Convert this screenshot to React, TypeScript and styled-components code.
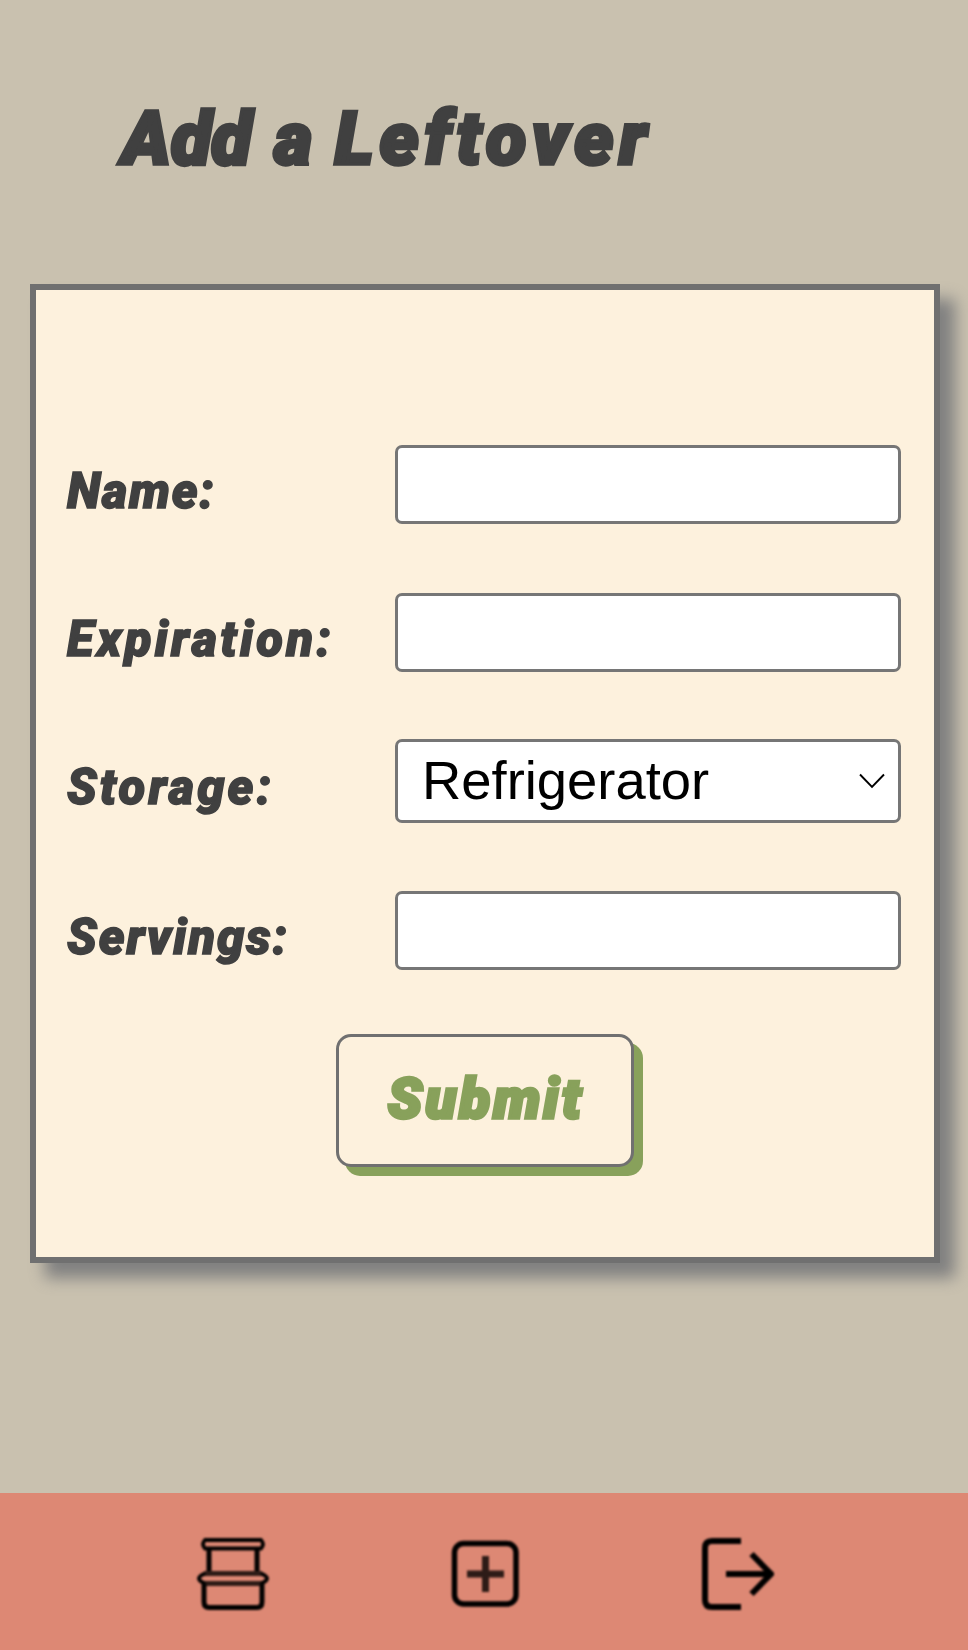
import React from 'react';
import styled, { createGlobalStyle } from 'styled-components';

const GlobalStyle = createGlobalStyle`
  *, *::before, *::after { box-sizing: border-box; }
  body { margin: 0; background: #c9c1af; }
`;

const display = `
  font-family: Roboto, "Liberation Sans", sans-serif;
  font-weight: 900;
  font-style: italic;
  white-space: nowrap;
`;

const Page = styled.div`
  display: flex;
  flex-direction: column;
  height: 1650px;
  overflow: hidden;
  background: #c9c1af;
`;

const Header = styled.header`
  height: 284px;
  padding: 94px 0 0 122px;
`;

const Title = styled.h1`
  ${display}
  margin: 0;
  font-size: 74px;
  line-height: 90px;
  color: #404040;
  -webkit-text-stroke: 3.5px #404040;
`;

const Word = styled.span<{ $spacing: number; $gap?: number }>`
  letter-spacing: ${(p) => p.$spacing}px;
  word-spacing: ${(p) => p.$gap ?? 0}px;
`;

const Card = styled.form`
  display: flex;
  flex-direction: column;
  width: 910px;
  height: 979px;
  margin: 0 0 0 30px;
  padding: 155px 33px 0 31px;
  border: 6px solid #707070;
  background: #fdf1dd;
  box-shadow: 15px 15px 15px #808080;
`;

const Row = styled.div<{ $gap: number }>`
  display: flex;
  justify-content: space-between;
  align-items: flex-start;
  margin-bottom: ${(p) => p.$gap}px;
`;

const Label = styled.label<{ $spacing: number; $drop?: number }>`
  ${display}
  padding-top: ${(p) => p.$drop ?? 22}px;
  font-size: 49px;
  line-height: 50px;
  letter-spacing: ${(p) => p.$spacing}px;
  color: #404040;
  -webkit-text-stroke: 1.4px #404040;
`;

const Input = styled.input`
  width: 506px;
  height: 79px;
  margin: 0;
  padding: 0 24px;
  border: 3px solid #767676;
  border-radius: 7px;
  background: #fff;
  font: 54px "Liberation Sans", Arial, sans-serif;
  outline: none;
`;

const Select = styled.button`
  display: flex;
  align-items: center;
  justify-content: space-between;
  width: 506px;
  height: 84px;
  padding: 0 13px 0 24px;
  border: 3px solid #767676;
  border-radius: 7px;
  background: #fff;
  color: #000;
  font: 54.4px/76px "Liberation Sans", Arial, sans-serif;
`;

const Submit = styled.button`
  ${display}
  align-self: center;
  width: 298px;
  height: 133px;
  margin-left: 2px;
  padding: 0 0 3px 2px;
  border: 3px solid #707070;
  border-radius: 15px;
  background: #fdf1dd;
  box-shadow: 9px 9px 0 #88a15b;
  color: #88a15b;
  font-size: 56px;
  line-height: 70px;
  letter-spacing: 3.4px;
  -webkit-text-stroke: 3.5px #88a15b;
`;

const Nav = styled.nav`
  display: flex;
  gap: 180.5px;
  height: 157px;
  margin-top: auto;
  padding: 45px 0 0 197px;
  background: #dd8874;
`;

const NavIcon = styled.svg`
  flex: none;
  width: 72px;
  height: 72px;
  fill: none;
  stroke: #000;
  filter: blur(0.9px);
`;

export default function App() {
  return (
    <>
      <GlobalStyle />
      <Page>
        <Header>
          <Title>
            <Word $spacing={0} $gap={4.5}>Add </Word>
            <Word $spacing={2}>a </Word>
            <Word $spacing={5.9}>Leftover</Word>
          </Title>
        </Header>
        <Card onSubmit={(e) => e.preventDefault()}>
          <Row $gap={69}>
            <Label htmlFor="name" $spacing={1.7}>Name:</Label>
            <Input id="name" />
          </Row>
          <Row $gap={67}>
            <Label htmlFor="expiration" $spacing={3.3}>Expiration:</Label>
            <Input id="expiration" />
          </Row>
          <Row $gap={68}>
            <Label htmlFor="storage" $spacing={3.1} $drop={24}>Storage:</Label>
            <Select id="storage" type="button">
              Refrigerator
              <svg width="26" height="16" viewBox="0 0 26 16" fill="none" stroke="#000" strokeWidth="1.9">
                <path d="M1 1.5 13 14 25 1.5" />
              </svg>
            </Select>
          </Row>
          <Row $gap={64}>
            <Label htmlFor="servings" $spacing={1.9}>Servings:</Label>
            <Input id="servings" />
          </Row>
          <Submit type="submit">Submit</Submit>
        </Card>
        <Nav>
          <NavIcon viewBox="0 0 72 72">
            <path strokeWidth="3.8" d="M8 2H64Q68 6 64 10.500H8Q4 6 8 2Z" />
            <path strokeWidth="5" d="M12 11V35M60 11V35" />
            <path stroke="#2d1b17" strokeWidth="5" d="M7 35.500H65M7 45.500H65" />
            <path strokeWidth="4" d="M8 35.500Q-4 40.500 8 45.500M64 35.500Q76 40.500 64 45.500" />
            <path strokeWidth="5" d="M7 46V64Q7 69.500 12 69.500H60Q65 69.500 65 64V46" />
          </NavIcon>
          <NavIcon viewBox="0 0 72 72">
            <rect x="4.500" y="5.500" width="61.500" height="60.500" rx="9" strokeWidth="5.500" />
            <path stroke="#2d1b17" strokeWidth="7" d="M17 36H54M35.500 18V54" />
          </NavIcon>
          <NavIcon viewBox="0 0 72 72">
            <path strokeWidth="6" d="M39 3H10Q3 3 3 10V62Q3 69 10 69H39" />
            <path strokeWidth="6" d="M24 36H69M49.500 16 69 36 49.500 56" />
          </NavIcon>
        </Nav>
      </Page>
    </>
  );
}
